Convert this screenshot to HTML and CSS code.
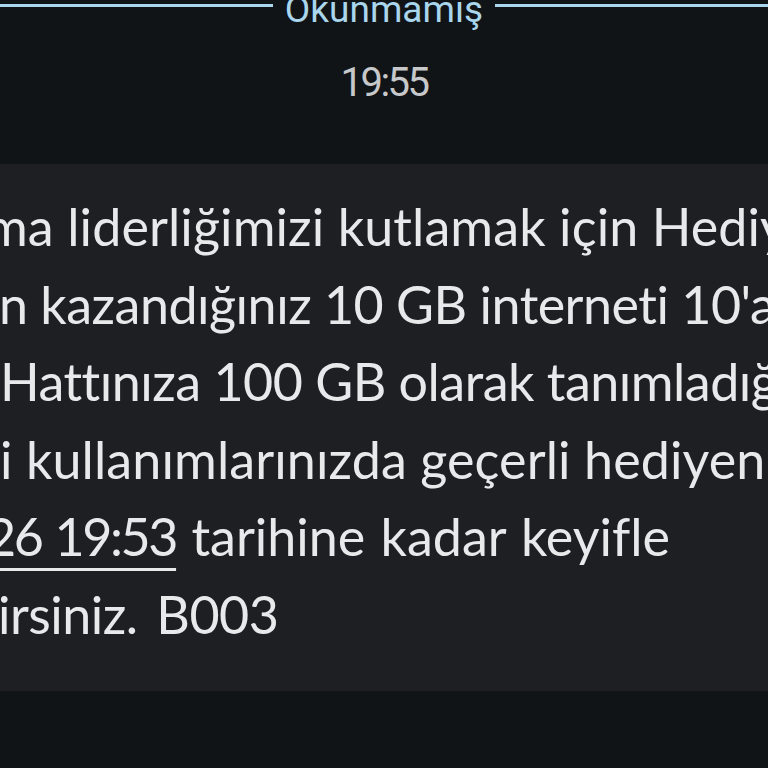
FILE: index.html
```html
<!DOCTYPE html>
<html lang="tr">
<head>
<meta charset="utf-8">
<title>Mesaj</title>
<link rel="stylesheet" href="styles.css">
</head>
<body>
<div class="screen">
  <div class="divider">
    <span class="rule"></span>
    <span class="divider-label">Okunmamış</span>
    <span class="rule"></span>
  </div>
  <div class="time">19:55</div>
  <div class="bubble">
    <div class="line l1">ma liderliğimizi kutlamak için Hediye</div>
    <div class="line l2">n kazandığınız 10 GB interneti 10'a katlayarak</div>
    <div class="line l3">Hattınıza 100 GB olarak tanımladığımız</div>
    <div class="line l4">i kullanımlarınızda geçerli hediyenizi</div>
    <div class="line l5"><span class="link">26 19:53</span> tarihine kadar keyifle</div>
    <div class="line l6">irsiniz. B003</div>
  </div>
</div>
</body>
</html>
```
FILE: styles.css
```css
html, body {
  margin: 0;
  padding: 0;
  background: #111417;
}
.screen {
  width: 768px;
  height: 768px;
  overflow: hidden;
  background: #111417;
  font-family: "Lato", "Roboto", sans-serif;
}
.divider {
  display: flex;
  align-items: center;
  gap: 12px;
  margin-top: -20px;
  height: 50px;
}
.rule {
  flex: 1;
  height: 3px;
  background: #a9d6ec;
}
.divider-label {
  font-family: "Roboto", sans-serif;
  font-size: 37px;
  color: #a9d6ec;
  line-height: 50px;
  position: relative;
  top: 5px;
}
.time {
  text-align: center;
  font-family: "Roboto", sans-serif;
  font-size: 40px;
  color: #c6c8ca;
  letter-spacing: -2.5px;
  margin-top: 29px;
  line-height: 48px;
}
.bubble {
  margin-top: 57px;
  background: #1d1f22;
  padding: 24px 0 34px 0;
  height: 469px;
}
.line {
  white-space: nowrap;
  font-size: 52px;
  letter-spacing: -0.5px;
  font-variant-ligatures: none;
  line-height: 77.6px;
  color: #e8e9eb;
}
.l1 { text-indent: -15px; letter-spacing: 0.1px; }
.l2 { text-indent: -1px; }
.l3 { text-indent: 0; }
.l4 { text-indent: 0; letter-spacing: 0.1px; }
.l5 { text-indent: -14px; letter-spacing: 0; word-spacing: 2px; }
.l6 { text-indent: -2px; word-spacing: 6px; }
.link {
  letter-spacing: -2.4px;
  text-decoration: underline;
  text-decoration-thickness: 3px;
  text-underline-offset: 12px;
}
```
